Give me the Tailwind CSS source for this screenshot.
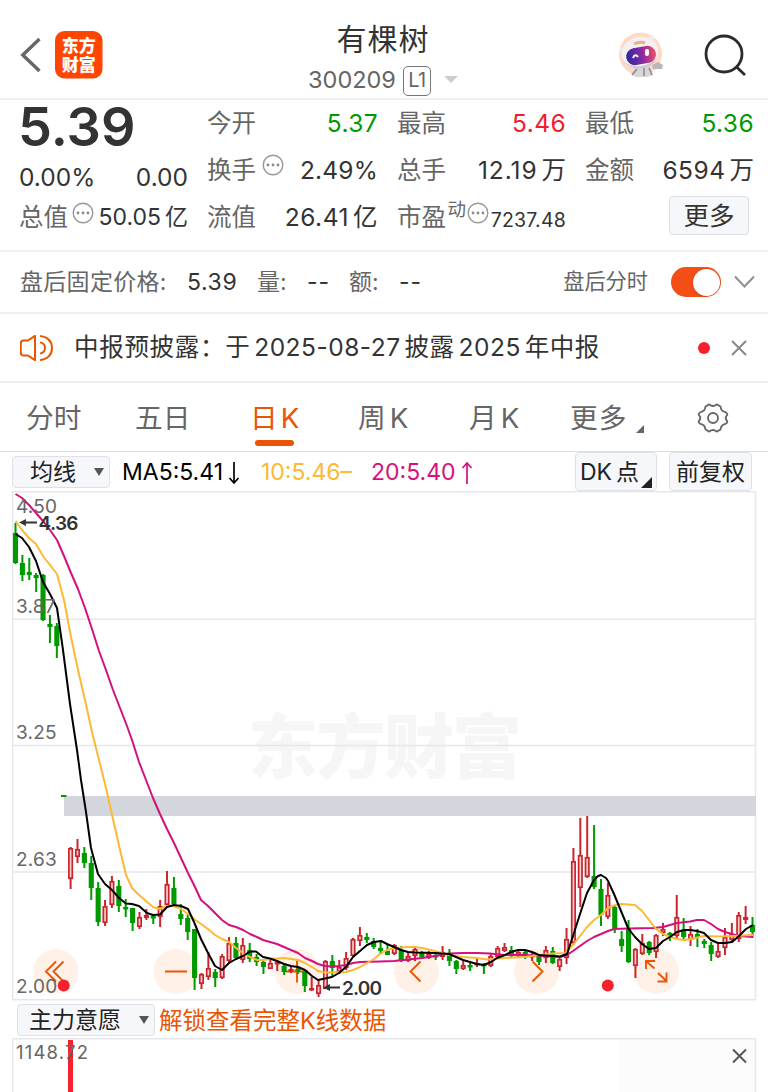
<!DOCTYPE html>
<html lang="zh-CN">
<head>
    <meta charset="UTF-8">
    <meta name="viewport" content="width=device-width, initial-scale=1.0">
    <script src="https://cdn.jsdelivr.net/npm/@tailwindcss/browser@4"></script>
    <title>有棵树 300209</title>
</head>
<body class="w-[768px] h-[1092px] overflow-hidden bg-white text-[#333] font-['Inter','Noto_Sans_CJK_SC',sans-serif] whitespace-nowrap">
    <!-- Header -->
    <header class="h-[100px] border-b-2 border-[#eee] flex justify-between pl-5 pr-[21px]">
        <div class="flex items-center gap-[14px] w-[160px] pt-[11px]">
            <svg class="w-[21px] h-[36px]" viewBox="0 0 21 36" fill="none" stroke="#666" stroke-width="3.400"><path d="M19.500 2 2.800 18l16.700 16"/></svg>
            <svg class="w-[48px] h-[48px]" viewBox="0 0 48 48">
                <rect width="47.500" height="47.500" rx="9.500" fill="#ff4500"/>
                <g fill="#fff" font-family="Noto Sans CJK SC" font-weight="900" font-size="17" text-anchor="middle">
                    <text x="23.700" y="20.500" textLength="34">东方</text>
                    <text x="23.700" y="40.200" textLength="34">财富</text>
                </g>
            </svg>
        </div>
        <div class="flex flex-col items-center pt-[17px] pr-[1px]">
            <h1 class="text-[30px] leading-[44px] tracking-[1px] text-[#333]">有棵树</h1>
            <div class="flex items-center h-[38px] text-[23.5px] text-[#666]">
                <span>300209</span>
                <span class="ml-[7px] mt-[2px] w-[28px] h-[30px] border-[1.5px] border-[#777] rounded-[5px] text-[20px] leading-[27px] text-center tracking-[-0.5px]">L1</span>
                <span class="ml-[13px] border-x-[7px] border-x-transparent border-t-[7px] border-t-[#ccc]"></span>
            </div>
        </div>
        <div class="flex items-center justify-end gap-[40px] w-[160px] pt-[12px]">
            <svg class="w-[46px] h-[46px]" viewBox="0 0 46 46">
                <circle cx="22.500" cy="22" r="21.500" fill="#ffd9c5"/>
                <path d="M18 34h14l3 9-6 2H18l-5-3z" fill="#d9d5d8"/>
                <path d="M19 37l-5 6M26 36v8M31 36l3 7" stroke="#8d878c" stroke-width="1.500"/>
                <path d="M34 33l6-3 5 3-1 4-9 0z" fill="#b9b6bc"/>
                <path d="M30 6l4-4 3 8zM4 15l-3-2 2 9z" fill="#eee"/>
                <ellipse cx="22" cy="20.500" rx="18.500" ry="15.500" fill="#f3f1f3" transform="rotate(-12 22 21)"/>
                <path d="M4 26c4 10 24 12 34 0-2 13-28 15-34 0z" fill="#cfcad0"/>
                <path d="M16 12q6-3 11-1" stroke="#e6b582" stroke-width="3" fill="none"/>
                <defs><linearGradient id="visor"><stop stop-color="#2c279e"/><stop offset=".55" stop-color="#8b2ba5"/><stop offset="1" stop-color="#ef5265"/></linearGradient></defs>
                <rect x="8" y="15" width="30" height="17" rx="8.500" fill="url(#visor)" transform="rotate(-10 23 23)"/>
                <path d="M15 26q2-5 5-1" stroke="#fff" stroke-width="2" fill="none"/>
                <rect x="27" y="17" width="4" height="7" rx="2" fill="#fff"/>
            </svg>
            <svg class="w-[43px] h-[43px]" viewBox="0 0 43 43" fill="none" stroke="#2b2b2b" stroke-width="2.800"><circle cx="20" cy="20" r="18"/><path d="M32 32.500 41 41"/></svg>
        </div>
    </header>

    <!-- Quote -->
    <section class="h-[150px] grid grid-cols-[169px_171px_169px_169px] gap-x-[19px] pl-[19px] text-[24.5px]">
        <div class="flex flex-col">
            <div class="h-[53px] text-[54px] leading-[53px] font-semibold -ml-[1px]">5.39</div>
            <div class="h-[47px] leading-[49px] flex justify-between"><span>0.00%</span><span>0.00</span></div>
            <div class="h-[35px] flex justify-between items-center">
                <span class="text-[#666]">总值</span>
                <svg class="w-[22px] h-[22px] -mt-[10px]" viewBox="0 0 22 22"><circle cx="11" cy="11" r="9.800" fill="none" stroke="#999" stroke-width="1.400"/><g fill="#888"><circle cx="6" cy="11" r="1.400"/><circle cx="11" cy="11" r="1.400"/><circle cx="16" cy="11" r="1.400"/></g></svg>
                <span class="text-[23px]">50.05<span class="ml-1">亿</span></span>
            </div>
        </div>
        <div class="flex flex-col *:h-[47px] *:flex *:justify-between *:items-center">
            <div><span class="text-[#666]">今开</span><span class="text-[#009a00] tracking-[0.4px]">5.37</span></div>
            <div><span class="flex text-[#666]">换手<svg class="w-[22px] h-[22px] ml-[6px] mt-[2px]" viewBox="0 0 22 22"><circle cx="11" cy="11" r="9.800" fill="none" stroke="#999" stroke-width="1.400"/><g fill="#888"><circle cx="6" cy="11" r="1.400"/><circle cx="11" cy="11" r="1.400"/><circle cx="16" cy="11" r="1.400"/></g></svg></span><span class="tracking-[0.2px]">2.49%</span></div>
            <div><span class="text-[#666]">流值</span><span class="tracking-[0.5px]">26.41<span class="ml-1">亿</span></span></div>
        </div>
        <div class="flex flex-col *:h-[47px] *:flex *:justify-between *:items-center">
            <div><span class="text-[#666]">最高</span><span class="text-[#f0202a] tracking-[0.4px]">5.46</span></div>
            <div><span class="text-[#666]">总手</span><span class="tracking-[0.9px]">12.19<span class="ml-1 tracking-normal">万</span></span></div>
            <div><span class="text-[#666]">市盈</span><span class="text-[18.5px] -mt-[15px] text-[#666]">动</span>
                <svg class="w-[22px] h-[22px] -mt-[10px]" viewBox="0 0 22 22"><circle cx="11" cy="11" r="9.800" fill="none" stroke="#999" stroke-width="1.400"/><g fill="#888"><circle cx="6" cy="11" r="1.400"/><circle cx="11" cy="11" r="1.400"/><circle cx="16" cy="11" r="1.400"/></g></svg>
                <span class="text-[19.5px] tracking-[0.2px] mt-[6px]">7237.48</span></div>
        </div>
        <div class="flex flex-col *:h-[47px] *:flex *:justify-between *:items-center">
            <div><span class="text-[#666]">最低</span><span class="text-[#009a00] tracking-[0.4px]">5.36</span></div>
            <div><span class="text-[#666]">金额</span><span class="tracking-[0.5px]">6594<span class="ml-1 tracking-normal">万</span></span></div>
            <div class="pr-[5px]"><span></span><button class="w-[80px] h-[39px] mt-[-4px] rounded border-[1.5px] border-[#dcdee5] bg-[#f6f7fa] text-[25.5px] leading-[34px]">更多</button></div>
        </div>
    </section>

    <!-- After-hours -->
    <section class="h-[64px] border-y-2 border-[#f0f0f0] flex items-center pl-5 pr-[13px] text-[23px] text-[#666]">
        <span class="w-[167px] tracking-[0.3px]">盘后固定价格:</span>
        <span class="w-[70px] text-[#333] tracking-[0.6px]">5.39</span>
        <span class="w-[50px]">量:</span>
        <span class="w-[42px] text-[#333] tracking-[1px]">--</span>
        <span class="w-[50px]">额:</span>
        <span class="text-[#333] tracking-[1px]">--</span>
        <span class="ml-auto text-[21.2px]">盘后分时</span>
        <span class="ml-[23px] w-[50px] h-[30px] rounded-full bg-[#f24e16] flex items-center justify-end pr-[1.5px]"><span class="size-[27px] rounded-full bg-white shadow"></span></span>
        <svg class="ml-[13px] w-[21px] h-[14px]" viewBox="0 0 21 14" fill="none" stroke="#8e8e93" stroke-width="2"><path d="m1 1.500 9.500 10 9.500-10"/></svg>
    </section>

    <!-- Notice -->
    <section class="h-[69px] border-b-2 border-[#eee] flex items-center pl-5 pr-[21px]">
        <svg class="w-[33px] h-[28px]" viewBox="0 0 33 30" preserveAspectRatio="none" fill="none" stroke="#ea5504" stroke-width="2" stroke-linejoin="round"><path d="M15 2v26l-7-5H3.500Q.800 23 .800 20V10Q.800 7 3.500 7H8zM20 9q5 1 5 6t-5 6M20 2q12 2 12 13T20 28"/></svg>
        <span class="ml-[21px] text-[24.5px] tracking-[0.7px] text-[#333]">中报预披露：<span class="tracking-[0.5px]">于<span class="mx-1">2025-08-27</span>披露<span class="mx-1">2025</span>年中报</span></span>
        <span class="ml-auto size-[12px] rounded-full bg-[#f5222d]"></span>
        <svg class="ml-[21px] w-4 h-4" viewBox="0 0 16 16" stroke="#888" stroke-width="2"><path d="m1 1 14 14M15 1 1 15"/></svg>
    </section>

    <!-- Tabs -->
    <nav class="h-[69px] border-b-[1.5px] border-[#ddd] flex items-center pl-[26px] text-[27.7px] text-[#666] leading-[68px] *:pt-[2px]">
        <span class="w-[109px]">分时</span>
        <span class="w-[115px]">五日</span>
        <span class="relative w-[108px] text-[#ea5504]">日<span class="ml-[3px]">K</span><span class="absolute left-[5px] bottom-[6px] w-[39px] h-[6px] rounded-full bg-[#ea5504]"></span></span>
        <span class="w-[111px]">周<span class="ml-[4px]">K</span></span>
        <span class="w-[101px]">月<span class="ml-[4px]">K</span></span>
        <span class="w-[66px] tracking-[1px]">更多</span>
        <svg class="w-2 h-[10px] mt-[22px]" viewBox="0 0 8 8"><path d="M8 0v8H0z" fill="#666"/></svg>
        <svg class="ml-[53px] w-[32px] h-[32px]" viewBox="0 0 32 32" fill="none" stroke="#666" stroke-width="2" stroke-linejoin="round"><path d="M12 1.500Q16 5 20 1.500l4 2.200q.500 5.300 5.500 6Q32 12 31 13q-3 3 0 6 1 1-1.500 3.300-5 .700-5.500 6L20 30.500Q16 27 12 30.500l-4-2.200q-.500-5.300-5.500-6Q0 20 1 19q3-3 0-6-1-1 1.500-3.300 5-.700 5.500-6z"/><circle cx="16" cy="16" r="5.300"/></svg>
    </nav>

    <!-- Indicator bar -->
    <section class="h-[39px] flex items-center pl-3 pr-4 text-[23px] text-[#222]">
        <span class="w-[98px] h-[32px] mt-[1px] rounded border-[1.5px] border-[#dfe1e8] bg-[#f6f7fa] flex items-center justify-between pl-[17px] pr-[5px]">均线<span class="border-x-[5px] border-x-transparent border-t-[8px] border-t-[#555]"></span></span>
        <span class="ml-[12px] w-[139px] flex items-center pt-[2px] text-black">MA5:5.41<svg class="ml-[5px] w-[12px] h-[24px]" viewBox="0 0 12 24" fill="none" stroke="#000" stroke-width="1.700"><path d="M6 1v21M1.500 17 6 22l4.500-5"/></svg></span>
        <span class="w-[110px] pt-[2px] text-[#fdb933]">10:5.46–</span>
        <span class="flex items-center pt-[2px] text-[#d4107f]">20:5.40<svg class="ml-[5px] w-[12px] h-[24px]" viewBox="0 0 12 24" fill="none" stroke="#d4107f" stroke-width="1.700"><path d="M6 23V2M1.500 7 6 2l4.500 5"/></svg></span>
        <span class="relative ml-auto w-[82px] h-[39px] rounded border-[1.5px] border-[#dfe1e8] bg-[#f6f7fa] pl-[4px] leading-[38px]">DK<span class="ml-[4px]">点</span><svg class="absolute right-[4px] bottom-[2px] w-[11px] h-[11px]" viewBox="0 0 11 11"><path d="M11 0v11H0z" fill="#222"/></svg></span>
        <span class="ml-[12px] w-[83px] h-[39px] rounded border-[1.5px] border-[#dfe1e8] bg-[#f6f7fa] text-center leading-[38px]">前复权</span>
    </section>

    <!-- Daily K chart -->
    <svg class="block ml-3 w-[745px] h-[510px]" viewBox="12 491 745 510" fill="none" font-family="Inter" font-size="19">
        <text x="385" y="773" text-anchor="middle" textLength="274" fill="#f6f6f6" font-family="Noto Sans CJK SC" font-weight="900" font-size="70">东方财富</text>
        <g stroke="#e6e7ed" stroke-width="1.500">
            <rect x="12.700" y="491.700" width="742.800" height="508"/>
            <path d="M12 619.300H756M12 745.500H756M12 872H756"/>
        </g>
        <rect x="64" y="796" width="692" height="20" fill="#d3d6dc"/>
        <path d="M61 796h5.500" stroke="#009a00" stroke-width="2"/>
        <g fill="#fff0e8">
            <circle cx="56" cy="971.500" r="22.500"/><circle cx="176" cy="971.500" r="22.500"/><circle cx="297" cy="971.500" r="22.500"/>
            <circle cx="416.500" cy="971.500" r="22.500"/><circle cx="536.500" cy="971.500" r="22.500"/><circle cx="656.500" cy="971.500" r="22.500"/>
        </g>
        <g stroke="#ea5504" stroke-width="1.900">
            <path d="m56 961.500-10 10 10 10M63.500 961.500l-10 10 10 10M165 971.500h22M286 971.500h22M297 960.500v22M420.500 961.500l-10 10 10 10M532.500 961.500l10 10-10 10"/>
            <path d="M646 969v-8h9M646 961l8.500 7.500M658 973l8.500 8M657.500 981.500h9v-9"/>
        </g>
        <g id="candles" stroke-width="2"></g>
        <g stroke-width="2" stroke-linejoin="round">
            <polyline stroke="#d4107f" points="15.500,494 22,498 29,505 36,513 43,521 50,530 57,540 64,556 71,573 78,589 85,608 92,629 99,651 106,670 113,690 120,708 127,726 133,743 139,762 146,780 153,798 160,814 167,829 174,843 181,858 188,873 194,885 201,900 208,906 215,913 222,920 229,925 236,927 243,930 250,934 257,937 263,940 270,942 277,944 284,947 291,950 298,953 305,958 312,961 318,964 325,966 332,966.500 339,966 346,965 353,963 360,962 380,961.500 394,961 408,959.500 422,958 435,956 449,953.500 463,953 477,953 490,953.500 504,955 525,955 546,956 560,957 567,955 573,951 580,946 587,941 594,937 601,934 608,931 614,929 628,928.500 653,928 663,927 670,925 677,923 690,921.500 697,920 704,920 711,924 718,929 725,932 732,934 739,936 753,937"/>
            <polyline stroke="#fdb933" points="15.500,521 22,530 29,538 36,544 43,556 50,565 57,574 64,600 71,637 78,670 85,700 92,732 99,760 106,788 113,819 120,850 126,875 132,888 139,895 146,901 153,907 160,909 167,906 174,906 181,909 188,914 194,919 201,924 208,929 215,935 222,939 229,942 236,948 243,953 250,957 257,960 263,960 270,959 277,958.500 284,958 291,959 298,960 305,963 312,967 318,971 325,972.500 346,972 353,970 360,967 367,963 374,959 380,954 387,950 394,948 408,947 415,947 422,948 435,951 449,955 463,957 477,958 487,959.500 504,958 525,957 539,955 553,953.500 565,953 573,945 580,936 587,927 594,920 601,915 608,908 614,905.500 621,904 635,905 642,911 649,920 656,929 663,934 670,937 677,939 684,940 691,939 704,936 718,936.500 732,936 753,935"/>
            <polyline stroke="#000" points="15.500,534 22,538 29,547 36,561 43,582 50,594 57,608 63,650 70,704 77,750 81,780 86,812 91,848 98,874 105,884 112,890 119,898 126,903.500 132,904 139,906 147,913 153,915 160,914.500 167,907 174,905 181,906 188,909 194,922 201,939 208,953 215,966 222,970 229,963 236,959 243,956 250,951.500 256,951.500 263,957 270,958.500 277,961 284,964 291,966 298,967 305,970 312,976 318,980 325,978.500 332,977 339,973 346,967 353,957 360,951 367,945 374,942 381,941 387,944 394,947 401,950 408,952 415,952.500 435,953 449,954 456,957 463,960 470,962 477,964 484,965 491,962 497,958 505,955 511,952 518,950 525,950 532,952 539,955 553,956 560,956.500 567,954 573,936 580,914 587,893 594,880 598,876 601,875 606,878 608,881 614,894 621,911 628,928 635,937 642,944 649,949 656,948 663,941 670,937 677,932 684,930 690,930 697,931 704,933 711,940 718,943 725,943 732,942 739,936 746,929 753,925"/>
        </g>
        <g fill="#666" letter-spacing="0.200">
            <text x="16" y="513">4.50</text><text x="16" y="612.500">3.87</text><text x="16" y="739">3.25</text><text x="16" y="866">2.63</text><text x="16" y="992.500">2.00</text>
        </g>
        <g fill="#333" font-weight="600">
            <text x="38.500" y="529.500" textLength="40">4.36</text><text x="342" y="995" textLength="40">2.00</text>
        </g>
        <path d="M37 522.500H24M340 987.500H328" stroke="#333" stroke-width="2"/>
        <path d="m19 522.500 7-3.500v7zM323 987.500l7-3.500v7z" fill="#333"/>
        <circle cx="63.700" cy="985.500" r="6" fill="#f5222d"/><circle cx="607.800" cy="985.500" r="6" fill="#f5222d"/>
    </svg>

    <!-- Sub chart -->
    <section class="h-[37px] flex items-center pl-[17px] text-[23px] text-[#222]">
        <span class="w-[138px] h-[32px] rounded border-[1.5px] border-[#dfe1e8] bg-[#f6f7fa] flex items-center justify-between pl-[11px] pr-[5px]"><span class="pt-[2px]">主力意愿</span><span class="border-x-[5px] border-x-transparent border-t-[8px] border-t-[#555]"></span></span>
        <span class="ml-[4px] pt-[2px] text-[#ea5504] text-[23.5px]">解锁查看完整K线数据</span>
    </section>
    <svg class="block ml-3 w-[745px] h-[54px]" viewBox="12 1038 745 54" fill="none">
        <rect x="618" y="1039" width="137" height="54" fill="#fcfcfc"/>
        <path d="M12.700 1092V1038.700H755.500V1092" stroke="#e6e7ed" stroke-width="1.500"/>
        <path d="M70.500 1040v52" stroke="#f5222d" stroke-width="5"/>
        <text x="16" y="1058.500" fill="#666" font-family="Inter" font-size="18.500" textLength="72">1148.72</text>
        <path d="m733 1049.500 13 13M746 1049.500l-13 13" stroke="#555" stroke-width="2"/>
    </svg>

    <script>
        // one entry per day: direction, high, body top, body bottom, low (null = no bar)
        const days = [
            'g 523 533 563 564', 'g 555 563 575 581', 'g 558 572 575 580', 'g 573 575 578 592', 'g 574 575 620 621', 'g 615 624 627 643', 'g 623 626 646 658', null,
            'r 847 848 879 889', 'r 839 849 857 863', 'g 847 853 863 868', 'g 856 863 888 900', 'g 882 888 922 926', 'r 900 906 923 926', 'r 876 881 905 908', 'g 880 886 906 912',
            'g 899 907 909 917', 'g 908 908 923 931', 'r 912 917 927 929', 'r 909 915 918 920', 'g 915 916 918 924', 'r 900 906 917 927', 'r 871 884 905 907', 'g 877 888 904 906',
            'g 904 914 919 925', 'g 914 918 932 940', 'g 929 929 978 990', 'r 973 974 984 989', 'r 952 968 977 980', 'g 969 972 978 987', 'r 954 956 978 979', 'r 937 943 961 963',
            'g 937 943 958 960', 'r 938 945 960 963', 'g 943 950 959 962', 'g 954 957 962 966', 'g 961 962 967 974', 'r 959 963 969 969', 'r 960 962 964 971', 'g 963 966 972 975',
            'r 967 969 971 973', 'g 966 969 971 974', 'g 970 972 986 992', 'r 977 988 990 991', 'r 980 985 994 997', 'r 960 961 989 989', 'g 955 961 968 977', 'r 960 967 972 974',
            'r 952 958 968 970', 'r 938 939 956 957', 'r 927 935 941 946', 'g 933 937 940 943', 'g 938 941 947 949', 'g 942 948 951 954', 'g 945 951 955 955', 'r 944 945 954 955',
            'g 946 950 961 962', 'r 952 956 961 962', 'r 947 949 956 961', 'g 951 953 957 959', 'r 951 954 958 959', 'g 952 955 957 960', 'r 946 952 957 960', 'g 949 955 961 966',
            'g 960 961 969 974', 'r 961 965 969 970', 'g 962 965 967 971', 'r 959 963 965 967', 'g 963 964 966 974', 'r 954 956 966 967', 'r 946 948 957 958', 'r 943 947 951 952',
            'g 946 950 955 957', 'r 950 952 956 958', 'g 950 952 955 959', 'r 953 955 957 961', 'g 954 956 962 965', 'r 946 950 958 963', 'g 947 951 963 964', 'r 958 959 967 971',
            'r 928 939 958 964', 'r 848 861 943 945', 'r 818 855 888 907', 'r 816 857 877 878', 'g 825 876 887 889', 'g 879 889 915 926', 'r 883 895 917 919', 'g 906 907 929 933',
            'g 931 939 946 952', 'g 920 929 962 963', 'r 948 949 966 978', 'r 934 943 954 955', 'g 941 942 953 955', 'r 934 935 952 958', 'r 923 929 933 936', 'g 932 933 937 941',
            'r 895 917 936 938', 'g 918 930 937 940', 'r 926 934 940 946', 'g 929 934 937 947', 'g 939 941 944 948', 'g 942 945 954 961', 'r 944 951 957 958', 'r 928 937 948 955',
            'r 923 934 940 943', 'r 912 915 939 942', 'r 906 917 920 924', 'g 917 925 932 938'
        ];
        document.getElementById('candles').innerHTML = days.map((day, i) => {
            if (!day) return '';
            const [dir, high, top, bottom, low] = day.split(' ');
            const x = 15.5 + i * 6.888;
            const color = dir === 'g' ? '#009a00' : '#c9252d';
            const fill = dir === 'g' ? color : '#f3cfd0';
            const h = Math.max(bottom - top - 1.6, 0.8);
            return `<path d="M${x} ${high}V${low}" stroke="${color}"/><rect x="${x - 1.7}" y="${+top + 0.8}" width="3.4" height="${h}" fill="${fill}" stroke="${color}" stroke-width="1.7"/>`;
        }).join('');
    </script>
</body>
</html>
